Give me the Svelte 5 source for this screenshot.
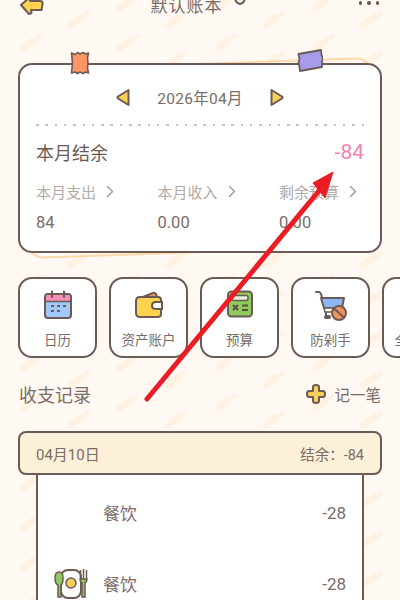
<script>
  const stats = [
    { label: '本月支出', value: '84' },
    { label: '本月收入', value: '0.00' },
    { label: '剩余预算', value: '0.00' }
  ];
  const tools = [
    { id: 'calendar', label: '日历' },
    { id: 'wallet', label: '资产账户' },
    { id: 'calc', label: '预算' },
    { id: 'cart', label: '防剁手' },
    { id: 'more', label: '全部功能' }
  ];
  const rows = [
    { name: '餐饮', amount: '-28', icon: false },
    { name: '餐饮', amount: '-28', icon: true }
  ];
</script>

<div class="screen">
  <svg class="pattern" width="400" height="600" aria-hidden="true">
    <defs>
      <pattern id="pencils" width="97.5" height="40" patternUnits="userSpaceOnUse">
        <g stroke="#fff2e3" fill="none" stroke-linecap="round">
          <path d="M71 25 82 17" stroke-width="7" />
          <path d="M86.500 14 87.500 13" stroke-width="5" />
          <path d="M23 8 34 0" stroke-width="7" />
          <path d="M38.500-3 39.500-4" stroke-width="5" />
          <path d="M23 48 34 40" stroke-width="7" />
          <path d="M38.500 37 39.500 36" stroke-width="5" />
        </g>
      </pattern>
    </defs>
    <rect width="400" height="600" fill="url(#pencils)" />
  </svg>

  <div class="page">
    <header class="topbar">
      <svg class="back" width="26" height="20" viewBox="0 0 26 20">
        <path d="M2 10 11 2V6H21Q24 6 23.500 9L22.500 15H12L12.500 18 10 19Z" fill="#ffd24f" stroke="#6b5b54" stroke-width="2" stroke-linejoin="round" />
      </svg>
      <span class="title">默认账本</span>
      <svg class="caret" width="14" height="10" viewBox="0 0 14 10">
        <path d="M2 1Q2 7 7 8 12 7 12 1" fill="none" stroke="#6b5b54" stroke-width="2" stroke-linecap="round" />
      </svg>
      <div class="dots"><i></i><i></i><i></i></div>
    </header>

    <section class="card-wrap">
      <div class="back-sheet"></div>
      <svg class="tape tape-orange" width="20" height="24" viewBox="0 0 20 24">
        <path d="M1.500 2 5 3.500 7.500 1.500 10 3 13 1.500 15.500 3 18.500 2 17.500 7 18 12 17.500 17 18.500 22 15.500 21 13 22.500 10 21 7.500 22.500 5 21 1.500 22 2 17 2.500 12 2 7Z" fill="#ff9566" stroke="#6b5b54" stroke-width="1.600" stroke-linejoin="round" />
      </svg>
      <svg class="tape tape-purple" width="26" height="24" viewBox="0 0 26 24">
        <path d="M1.500 5 24 1 24.500 6 26 9 25 13 25 18 3 22 2.500 18 1.500 14 2.500 10Z" fill="#a79cec" stroke="#6b5b54" stroke-width="1.800" stroke-linejoin="round" />
      </svg>

      <div class="card">
        <div class="month">
          <svg width="14" height="19" viewBox="0 0 14 19">
            <path d="M12.500 2V17L2 10.500Q1 9.500 2 8.500Z" fill="#f8cf58" stroke="#6b5b54" stroke-width="2" stroke-linejoin="round" />
          </svg>
          <span>2026年04月</span>
          <svg width="14" height="19" viewBox="0 0 14 19">
            <path d="M1.500 2V17L12 10.500Q13 9.500 12 8.500Z" fill="#f8cf58" stroke="#6b5b54" stroke-width="2" stroke-linejoin="round" />
          </svg>
        </div>
        <div class="dash"></div>
        <div class="balance">
          <span>本月结余</span>
          <span class="minus">-84</span>
        </div>
        <div class="stats">
          {#each stats as s}
            <div class="stat">
              <div class="stat-label">
                {s.label}
                <svg width="8" height="13" viewBox="0 0 8 13">
                  <path d="M1.500 1.500 6.500 6.500 1.500 11.500" fill="none" stroke="#a9a09b" stroke-width="1.600" stroke-linecap="round" stroke-linejoin="round" />
                </svg>
              </div>
              <div class="stat-value">{s.value}</div>
            </div>
          {/each}
        </div>
      </div>
    </section>

    <div class="tools">
      {#each tools as t}
        <div class="tool">
          <div class="tool-icon">
            {#if t.id === 'calendar'}
              <svg width="30" height="30" viewBox="0 0 30 30">
                <rect x="2" y="4" width="26" height="24" rx="3" fill="#a3c8fb" stroke="#6b5b54" stroke-width="2" />
                <path d="M3 11V7q0-2 2-2h20q2 0 2 2v4z" fill="#f78fb3" />
                <path d="M2 11.500H28" stroke="#6b5b54" stroke-width="1.500" />
                <path d="M9 1.500V7M21 1.500V7" stroke="#6b5b54" stroke-width="2" stroke-linecap="round" />
                <path d="M8 16h3M14 16h3M20 16h3M8 21h3M14 21h3" stroke="#6b5b54" stroke-width="2" />
              </svg>
            {:else if t.id === 'wallet'}
              <svg width="30" height="30" viewBox="0 0 30 30">
                <path d="M4 9 19 3q3-1 4 4" fill="#f0935e" stroke="#6b5b54" stroke-width="2" stroke-linejoin="round" />
                <path d="M2 11q0-4 4-4h18q3 0 3 3v14q0 3-3 3H6q-4 0-4-4z" fill="#ffd24f" stroke="#6b5b54" stroke-width="2" />
                <path d="M28 12h-6q-4 0-4 3.500t4 3.500h6z" fill="#fff" stroke="#6b5b54" stroke-width="2" />
              </svg>
            {:else if t.id === 'calc'}
              <svg width="28" height="28" viewBox="0 0 28 28">
                <rect x="2" y="1.500" width="24" height="25" rx="3.500" fill="#8fcb5c" stroke="#6b5b54" stroke-width="2" />
                <rect x="6" y="5.500" width="16" height="5" rx="2" fill="#e6efd9" stroke="#6b5b54" stroke-width="1.500" />
                <path d="M7 15l5 5M12 15l-5 5M16 15.500h6M16 20h6" stroke="#5b4d47" stroke-width="2" />
              </svg>
            {:else if t.id === 'cart'}
              <svg width="32" height="32" viewBox="0 0 32 32">
                <path d="M1 2H4Q5 2 6 4L11 21V25" fill="none" stroke="#6b5b54" stroke-width="2" stroke-linecap="round" stroke-linejoin="round" />
                <path d="M6 8H29L27 18H9Z" fill="#8db8f5" stroke="#6b5b54" stroke-width="2" stroke-linejoin="round" />
                <path d="M9 18H27L26 22H10Z" fill="#fff" stroke="#6b5b54" stroke-width="1.500" />
                <path d="M11 27h3" stroke="#6b5b54" stroke-width="4" stroke-linecap="round" />
                <circle cx="24" cy="23" r="7" fill="#f0935e" stroke="#6b5b54" stroke-width="2" />
                <path d="M19 18.500 29 27.500" stroke="#6b5b54" stroke-width="2" />
              </svg>
            {:else}
              <svg width="30" height="30" viewBox="0 0 30 30">
                <rect x="3" y="3" width="24" height="24" rx="4" fill="#ffd24f" stroke="#6b5b54" stroke-width="2" />
              </svg>
            {/if}
          </div>
          <span class="tool-label">{t.label}</span>
        </div>
      {/each}
    </div>

    <div class="section-head">
      <span class="section-title">收支记录</span>
      <div class="add">
        <svg width="20" height="20" viewBox="0 0 20 20">
          <path d="M7 3Q7 1 10 1 13 1 13 3V7H17Q19 7 19 10 19 13 17 13H13V17Q13 19 10 19 7 19 7 17V13H3Q1 13 1 10 1 7 3 7H7Z" fill="#f8cf58" stroke="#6b5b54" stroke-width="2" stroke-linejoin="round" />
        </svg>
        <span>记一笔</span>
      </div>
    </div>

    <div class="day-head">
      <span class="day-date">04月10日</span>
      <span>结余：-84</span>
    </div>
    <div class="day-list">
      {#each rows as r}
        <div class="row">
          <div class="row-icon">
            {#if r.icon}
              <svg width="34" height="32" viewBox="0 0 34 32">
                <rect x="7" y="2" width="20" height="28" rx="7" fill="#fff" stroke="#6b5b54" stroke-width="2" />
                <circle cx="17" cy="15" r="5" fill="#f8cf58" stroke="#6b5b54" stroke-width="1.500" />
                <path d="M5 4q4 0 4 6t-2 7v12H4V17q-3-1-3-7t4-6z" fill="#8fcb5c" stroke="#6b5b54" stroke-width="1.500" />
                <path d="M26 11q0 3 2 4v14h3V15q2-1 2-4z" fill="#8fcb5c" stroke="#6b5b54" stroke-width="1.500" />
                <path d="M26.500 11V2M29.500 11V1M32.500 11V2" stroke="#6b5b54" stroke-width="1.500" />
              </svg>
            {/if}
          </div>
          <span class="row-name">{r.name}</span>
          <span class="row-amount">{r.amount}</span>
        </div>
      {/each}
    </div>
  </div>

  <!-- red annotation arrow painted on top of the screenshot -->
  <svg class="annotation" width="400" height="600" aria-hidden="true">
    <path d="M147 399 323 186" fill="none" stroke="#ea1c24" stroke-width="5" stroke-linecap="round" />
    <path d="M333 172 313 183 325 198Z" fill="#ea1c24" stroke="#ea1c24" stroke-width="1" stroke-linejoin="round" />
  </svg>
</div>

<style>
  :global(body) {
    margin: 0;
    background: #fff8f3;
  }

  .screen {
    position: relative;
    width: 400px;
    height: 600px;
    overflow: hidden;
    background: #fff8f3;
    font-family: Roboto, "Noto Sans CJK SC", sans-serif;
    color: #7a6c66;
  }

  .pattern,
  .annotation {
    position: absolute;
    left: 0;
    top: 0;
  }

  .annotation {
    z-index: 5;
  }

  .page {
    position: relative;
    margin-top: -14px;
  }

  .topbar {
    position: relative;
    display: flex;
    align-items: center;
    justify-content: center;
    gap: 10px;
    height: 40px;
  }

  .back {
    position: absolute;
    left: 19px;
    top: 9px;
  }

  .title {
    font-size: 17px;
    line-height: 40px;
    letter-spacing: 1px;
    margin-left: -3px;
  }

  .caret {
    position: relative;
    top: 1px;
    margin-top: -12px;
  }

  .dots {
    position: absolute;
    right: 21px;
    top: 15px;
    display: flex;
    gap: 5px;
  }

  .dots i {
    width: 3.500px;
    height: 3.500px;
    border-radius: 50%;
    background: #6b5b54;
  }

  .card-wrap {
    position: relative;
    margin: 37px 18px 0;
  }

  .back-sheet {
    position: absolute;
    left: 8px;
    right: 8px;
    top: 0;
    bottom: 0;
    border: 2px solid #ffd9a8;
    border-radius: 14px;
    transform: rotate(-2deg);
  }

  .tape {
    position: absolute;
    z-index: 2;
  }

  .tape-orange {
    left: 52px;
    top: -12px;
  }

  .tape-purple {
    left: 279px;
    top: -14px;
  }

  .card {
    position: relative;
    box-sizing: border-box;
    height: 190px;
    background: #fff;
    border: 2px solid #6b5b54;
    border-radius: 14px;
    padding: 22px 16px 0;
  }

  .month {
    display: flex;
    align-items: center;
    justify-content: center;
    gap: 27px;
    height: 20px;
    font-size: 15.500px;
    letter-spacing: 0.3px;
  }

  .dash {
    height: 2px;
    margin-top: 17px;
    background: repeating-linear-gradient(90deg, #c9c4c0 0 2.500px, transparent 2.500px 9.300px);
  }

  .balance {
    display: flex;
    align-items: center;
    justify-content: space-between;
    margin-top: 11px;
    height: 30px;
    font-size: 18px;
    color: #6b5b54;
  }

  .minus {
    font-size: 21px;
    color: #f47fb0;
  }

  .stats {
    display: flex;
    margin-top: 13px;
  }

  .stat {
    flex: 0 0 121.500px;
  }

  .stat-label {
    display: flex;
    align-items: center;
    gap: 10px;
    height: 22px;
    font-size: 15px;
    color: #b3aba6;
  }

  .stat-value {
    margin-top: 10px;
    font-size: 16.500px;
    line-height: 22px;
  }

  .tools {
    display: flex;
    gap: 12px;
    margin: 24px 0 0 18px;
  }

  .tool {
    flex: 0 0 79px;
    box-sizing: border-box;
    height: 81px;
    background: #fff;
    border: 2px solid #6b5b54;
    border-radius: 14px;
    display: flex;
    flex-direction: column;
    align-items: center;
  }

  .tool-icon {
    height: 46px;
    margin-top: 11px;
    display: flex;
    align-items: flex-start;
    justify-content: center;
  }

  .tool-label {
    font-size: 13.500px;
    line-height: 20px;
    margin-top: -6px;
    white-space: nowrap;
  }

  .section-head {
    display: flex;
    align-items: center;
    justify-content: space-between;
    margin: 21px 19px 0;
    height: 30px;
  }

  .section-title {
    font-size: 18px;
  }

  .add {
    display: flex;
    align-items: center;
    gap: 8px;
    font-size: 15.500px;
  }

  .day-head {
    display: flex;
    align-items: center;
    justify-content: space-between;
    box-sizing: border-box;
    height: 44px;
    margin: 22px 18px 0;
    padding: 0 16px;
    background: #fdf0d8;
    border: 2px solid #6b5b54;
    border-radius: 8px;
    font-size: 14.500px;
  }

  .day-date {
    font-size: 15px;
  }

  .day-list {
    margin: 0 36px;
    background: #fff;
    border-left: 2px solid #6b5b54;
    border-right: 2px solid #6b5b54;
    padding-top: 2px;
  }

  .row {
    display: flex;
    align-items: center;
    height: 71px;
    padding: 0 16px;
  }

  .row-icon {
    width: 49px;
    display: flex;
  }

  .row-name {
    flex: 1;
    font-size: 17px;
  }

  .row-amount {
    font-size: 17px;
  }
</style>
